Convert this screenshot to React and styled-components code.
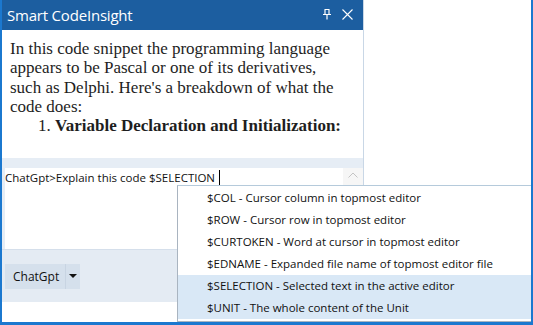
import React from 'react'
import styled, { createGlobalStyle } from 'styled-components'

const GlobalStyle = createGlobalStyle`
  html, body { margin: 0; padding: 0; background: #fff; }
  * { box-sizing: border-box; }
`

const ui = `"Open Sans", "Noto Sans", sans-serif`

const Window = styled.div`
  position: relative;
  width: 533px;
  height: 325px;
  display: flex;
  border-left: 2px solid #1b78cf;
  border-right: 2px solid #1b78cf;
  border-bottom: 3px solid #1b78cf;
  overflow: hidden;
`

const Panel = styled.div`
  width: 362px;
  display: flex;
  flex-direction: column;
  border-right: 1px solid #c9d7e6;
`

const TitleBar = styled.div`
  height: 30px;
  flex: none;
  background: #1c5ea0;
  color: #fff;
  display: flex;
  align-items: center;
  padding: 0 10px 1px 5px;
  font-family: ${ui};
  font-size: 15px;
`

const Title = styled.div`
  flex: 1;
  letter-spacing: -0.2px;
`

const TitleIcons = styled.div`
  display: flex;
  align-items: center;
  gap: 10px;
`

const Response = styled.div`
  height: 128px;
  flex: none;
  padding: 9px 18px 0 8px;
  font-family: "Liberation Serif", serif;
  font-size: 17px;
  line-height: 19.3px;
  color: #1e1e1e;
`

const Para = styled.p`
  margin: 0;
`

const List = styled.ol`
  margin: 0;
  padding-left: 45px;
  font-weight: bold;
  white-space: nowrap;
  li::marker { font-weight: normal; }
`

const Splitter = styled.div`
  height: 10px;
  flex: none;
  background: #e6edf5;
`

const InputRow = styled.div`
  height: 81px;
  flex: none;
  display: flex;
  background: #e6edf5;
  padding-left: 3px;
`

const InputBox = styled.div`
  flex: 1;
  background: #fff;
  padding: 1px 0 0 0;
  font-family: ${ui};
  font-size: 11.5px;
  line-height: 17px;
  color: #111;
  display: flex;
  align-items: flex-start;
`

const Caret = styled.span`
  display: inline-block;
  width: 1px;
  height: 15px;
  background: #000;
  margin: 1px 0 0 4px;
`

const ScrollCol = styled.div`
  width: 20px;
  background: #f6f6f6;
  display: flex;
  justify-content: center;
  padding-top: 4px;
`

const Toolbar = styled.div`
  height: 53px;
  flex: none;
  background: #e4ebf3;
  border-top: 1px solid #d5dfeb;
  display: flex;
  align-items: center;
  padding-left: 3px;
`

const Dropdown = styled.div`
  display: flex;
  height: 25px;
  background: #d5e0ec;
  font-family: ${ui};
  font-size: 12px;
  color: #111;
`

const DropLabel = styled.div`
  width: 60px;
  display: flex;
  align-items: center;
  padding-left: 8px;
`

const DropArrow = styled.div`
  width: 15px;
  border-left: 1px solid #c8d4e2;
  display: flex;
  align-items: center;
  justify-content: center;
`

const Footer = styled.div`
  flex: 1;
  background: #fff;
`

const Side = styled.div`
  flex: 1;
  background: #fff;
`

const Popup = styled.div`
  position: absolute;
  left: 175px;
  top: 185px;
  right: 0;
  bottom: 0;
  background: #fff;
  border: 1px solid #a9b4c0;
  border-top-color: #b5cadb;
  border-right: none;
  padding-top: 1px;
  font-family: ${ui};
  font-size: 11.5px;
  color: #111;
`

const Item = styled.div`
  height: 22px;
  line-height: 22px;
  padding-left: 29px;
  background: ${p => (p.$active ? '#d9e8f6' : 'transparent')};
`

const items = [
  ['$COL', 'Cursor column in topmost editor'],
  ['$ROW', 'Cursor row in topmost editor'],
  ['$CURTOKEN', 'Word at cursor in topmost editor'],
  ['$EDNAME', 'Expanded file name of topmost editor file'],
  ['$SELECTION', 'Selected text in the active editor', true],
  ['$UNIT', 'The whole content of the Unit', true],
]

export default function App() {
  return (
    <>
      <GlobalStyle />
      <Window>
        <Panel>
          <TitleBar>
            <Title>Smart CodeInsight</Title>
            <TitleIcons>
              <svg width="10" height="11" viewBox="0 0 10 11">
                <path d="M2.5 0.5h5M3 0.5v5M7 0.5v5M1 5.5h8M5 5.5v5" stroke="#fff" strokeWidth="1.2" fill="none" />
              </svg>
              <svg width="11" height="11" viewBox="0 0 11 11">
                <path d="M0.5 0.5l10 10M10.5 0.5l-10 10" stroke="#fff" strokeWidth="1.1" />
              </svg>
            </TitleIcons>
          </TitleBar>
          <Response>
            <Para>
              In this code snippet the programming language appears to be Pascal or one of its derivatives,
              such as Delphi. Here's a breakdown of what the code does:
            </Para>
            <List>
              <li>Variable Declaration and Initialization:</li>
            </List>
          </Response>
          <Splitter />
          <InputRow>
            <InputBox>
              ChatGpt&gt;Explain this code $SELECTION<Caret />
            </InputBox>
            <ScrollCol>
              <svg width="10" height="6" viewBox="0 0 10 6">
                <path d="M0.5 5.5l4.5-4.5 4.5 4.5" stroke="#c4c4c4" strokeWidth="1" fill="none" />
              </svg>
            </ScrollCol>
          </InputRow>
          <Toolbar>
            <Dropdown>
              <DropLabel>ChatGpt</DropLabel>
              <DropArrow>
                <svg width="8" height="4" viewBox="0 0 8 4">
                  <path d="M0 0h8L4 4z" fill="#111" />
                </svg>
              </DropArrow>
            </Dropdown>
          </Toolbar>
          <Footer />
        </Panel>
        <Side />
        <Popup>
          {items.map(([k, d, a]) => (
            <Item key={k} $active={a}>
              {k} - {d}
            </Item>
          ))}
        </Popup>
      </Window>
    </>
  )
}
